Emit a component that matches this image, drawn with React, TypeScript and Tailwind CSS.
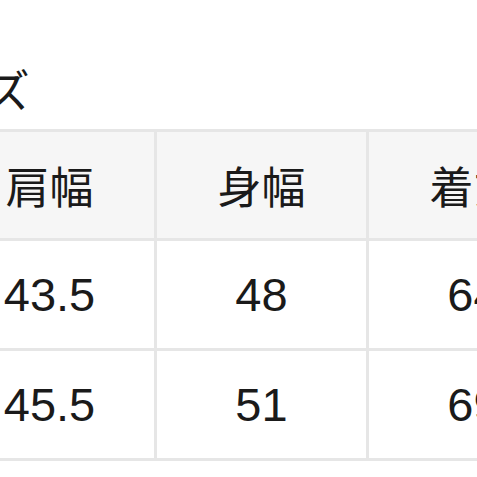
import React from "react";

const headers = ["肩幅", "身幅", "着丈"];
const rows = [
  ["43.5", "48", "64"],
  ["45.5", "51", "69"],
];

export default function App() {
  return (
    <div
      className="w-[477px] h-[477px] overflow-hidden bg-white text-[#1a1a1a]"
      style={{ fontFamily: '"Liberation Sans", "Noto Sans CJK JP", sans-serif' }}
    >
      <div className="ml-[-58px] w-[700px]">
        <div className="h-[129px] pt-[66px]">
          <div
            className="ml-[-46px] text-[45px] leading-[45px]"
            style={{ fontFamily: '"Noto Sans CJK JP", sans-serif' }}
          >
            サイズ
          </div>
        </div>
        <div className="grid grid-cols-[209px_209px_209px] gap-[3px] bg-[#e6e6e6] p-[3px] w-fit">
          {headers.map((h) => (
            <div
              key={h}
              className="h-[106px] bg-[#f6f6f6] flex items-center justify-center text-[44px] leading-none"
              style={{ fontFamily: '"Noto Sans CJK JP", sans-serif' }}
            >
              {h}
            </div>
          ))}
          {rows.map((r, i) =>
            r.map((v, j) => (
              <div
                key={`${i}-${j}`}
                className="h-[107px] bg-white flex items-center justify-center text-[47px] leading-none"
              >
                {v}
              </div>
            ))
          )}
        </div>
      </div>
    </div>
  );
}
